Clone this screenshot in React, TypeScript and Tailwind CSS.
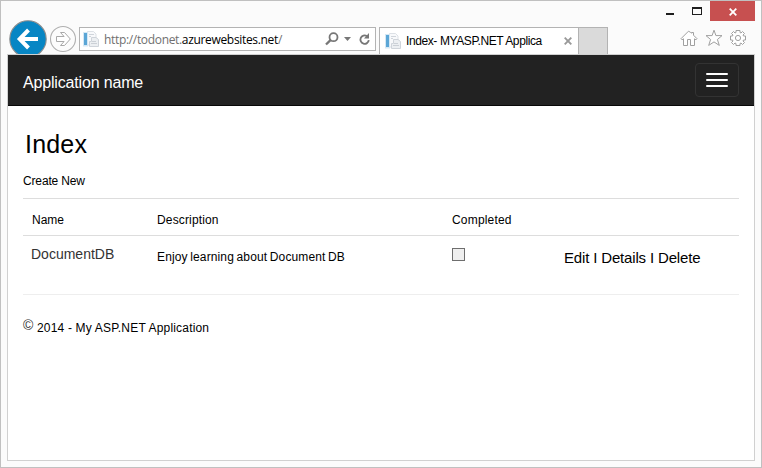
import React from "react";

const PageIcon = () => (
  <svg width="16" height="17" viewBox="0 0 16 17" className="block shrink-0">
    <path d="M4.500 2.500V.5h6l2.500 2.500v11h-8.500z" fill="#f8f9fb" stroke="#dde1e6" />
    <rect x="0" y="1" width="5" height="14.500" fill="#d5e8f5" />
    <rect x="1" y="2" width="3" height="12" fill="#5ba6d6" />
    <path d="M6 3.500h5M6 5.500h2" stroke="#d0d5db" />
    <path d="M8.500 6.500h4.500l2.500 2v7H6.500v-5h2z" fill="#eceff2" stroke="#cfd4da" />
    <path d="M9 10.500h4M8 12.500h6" stroke="#cbd0d6" />
  </svg>
);

const BackIcon = () => (
  <svg width="39" height="34" viewBox="0 0 39 34" className="block shrink-0">
    <circle cx="19" cy="19" r="18.200" fill="#0786c4" stroke="#8c8c8c" strokeWidth="1.1" />
    <path d="M10.500 19h18.500M19.500 10l-8.800 9 8.800 9" fill="none" stroke="#fff" strokeWidth="4" />
  </svg>
);

const ForwardIcon = () => (
  <svg width="28" height="28" viewBox="0 0 28 28" className="block shrink-0">
    <circle cx="14" cy="14" r="12.500" fill="#fcfcfc" stroke="#b0b0b0" strokeWidth="1.1" />
    <path d="M7.500 11.500h7.600l-3.600-4h4l5.800 6.500-5.800 6.500h-4l3.600-4H7.500z" fill="#fff" stroke="#a9a9a9" />
  </svg>
);

const SearchIcon = () => (
  <svg width="14" height="14" viewBox="0 0 14 14" className="block">
    <circle cx="8.500" cy="5.200" r="4" fill="none" stroke="#777" strokeWidth="1.800" />
    <path d="M5.500 8.200L1 12.500" stroke="#777" strokeWidth="2.400" />
  </svg>
);

const RefreshIcon = () => (
  <svg width="12" height="13" viewBox="0 0 12 13" className="block">
    <path d="M9.800 7.200a4.200 4.200 0 1 1-2-4.200" fill="none" stroke="#777" strokeWidth="1.800" />
    <path d="M10 0v5.500H5z" fill="#777" />
  </svg>
);

const HomeIcon = () => (
  <svg width="18" height="17" viewBox="0 0 18 17" className="block">
    <path
      d="M8.500 1.200L1 8.700l1 1.100 1.500-1v6.700h4v-6h3v6h4V8.800l1.500 1 1-1.100-3.500-3.500V2.500h-2v.8l-1-1z"
      fill="#fff"
      stroke="#a0a0a0"
    />
  </svg>
);

const StarIcon = () => (
  <svg width="18" height="18" viewBox="0 0 18 18" className="block">
    <path
      d="M9 1.200l1.900 5.400h6.100l-4.600 3.900 1.900 5.900L9 12.900l-5.300 3.500 1.900-5.900L1 6.600h6.100z"
      fill="#fff"
      stroke="#a0a0a0"
    />
  </svg>
);

const GearIcon = () => (
  <svg width="18" height="18" viewBox="0 0 18 18" className="block">
    <path
      d="M7 1.500h4v2l1 .5 1.500-1.500 2 2L14 6l.5 1h2v4h-2l-.5 1 1.500 1.500-2 2L12 14l-1 .5v2H7v-2L6 14l-1.500 1.500-2-2L4 12l-.5-1h-2V7h2L4 6 2.500 4.500l2-2L6 4l1-.5z"
      fill="#fff"
      stroke="#a0a0a0"
      strokeLinejoin="round"
    />
    <circle cx="9" cy="9" r="2.600" fill="#fff" stroke="#a0a0a0" />
  </svg>
);

const grid = "grid grid-cols-[125px_295px_112px_1fr] pl-[9px]";

function BrowserChrome() {
  return (
    <header className="h-[53px] shrink-0">
      <div className="flex h-5 items-start justify-end pr-[6px]">
        <svg width="44" height="20" viewBox="0 0 44 20" className="block">
          <rect x="0" y="12" width="8" height="2" fill="#1e1e1e" />
          <path d="M26 6h10v8H26zM27 8v5h8V8z" fill="#1e1e1e" fillRule="evenodd" />
        </svg>
        <div className="flex h-5 w-[45px] items-center justify-center bg-[#c75050]">
          <svg width="8" height="8" viewBox="0 0 8 8" className="mt-[1px] block">
            <path d="M.7.7l6.600 6.600M7.300.7L.7 7.300" stroke="#fff" strokeWidth="1.800" />
          </svg>
        </div>
      </div>
      <div className="flex h-[33px] items-start pl-2">
        <div className="-mt-[1px]"><BackIcon /></div>
        <div className="ml-[1px] mt-1"><ForwardIcon /></div>
        <div className="ml-[2px] mt-[6px] flex h-6 w-[297px] items-center border border-[#b3b3b3] bg-white">
          <div className="ml-[3px]"><PageIcon /></div>
          <span className="ml-[5px] w-[221px] shrink-0 whitespace-pre pt-[1px] font-['Open_Sans',sans-serif] text-[12px] tracking-[-0.33px] text-[#707070]">
            http://todonet.<span className="text-black">azurewebsites.net</span>/
          </span>
          <div><SearchIcon /></div>
          <svg width="7" height="4" viewBox="0 0 7 4" className="ml-[5px] block"><path d="M0 0h7L3.500 4z" fill="#777" /></svg>
          <div className="ml-[8px]"><RefreshIcon /></div>
        </div>
        <div className="ml-[3px] mt-[6px] flex h-[27px] w-[200px] items-center border border-b-0 border-[#b3b3b3] bg-white">
          <div className="ml-[5px]"><PageIcon /></div>
          <span className="ml-[5px] w-[158px] whitespace-nowrap text-[12px] tracking-[-0.4px]">Index- MYASP.NET Applica</span>
          <svg width="8" height="8" viewBox="0 0 8 8" className="block"><path d="M.7.7l6.600 6.600M7.300.7L.7 7.300" stroke="#999" strokeWidth="1.900" /></svg>
        </div>
        <div className="mt-[6px] h-[27px] w-[29px] border border-b-0 border-l-0 border-[#b3b3b3] bg-[#dadada]" />
        <div className="ml-[72px] mt-[8px] flex items-center gap-[6.500px]">
          <HomeIcon />
          <StarIcon />
          <GearIcon />
        </div>
      </div>
    </header>
  );
}

export default function App() {
  return (
    <div className="flex h-[468px] w-[762px] flex-col overflow-hidden border border-[#c0c0c0] bg-[#fbfbfb] font-['Liberation_Sans',Arial,sans-serif] text-[12px] leading-4 text-black">
      <BrowserChrome />
      <div className="ml-[6px] flex h-[407px] w-[748px] flex-col border border-[#d0d0d0] bg-white">
        <nav className="flex h-[51px] shrink-0 items-center justify-between border-b border-[#080808] bg-[#222] pl-[15px] pr-[15px]">
          <span className="mt-[5px] text-[16px] leading-5 tracking-[-0.17px] text-white">Application name</span>
          <button className="flex h-[34px] w-11 flex-col items-center justify-center gap-1 rounded border border-[#333]" aria-label="Menu">
            <span className="h-[2px] w-[22px] rounded-[1px] bg-white" />
            <span className="h-[2px] w-[22px] rounded-[1px] bg-white" />
            <span className="h-[2px] w-[22px] rounded-[1px] bg-white" />
          </button>
        </nav>
        <main className="px-[15px] pt-[22px]">
          <h1 className="ml-[2px] h-8 text-[25px] leading-8 tracking-[0.2px]">Index</h1>
          <a className="mt-[13px] block h-4 tracking-[-0.15px]">Create New</a>
          <section className="mt-[9px] border-t border-[#ddd]">
            <div className={`${grid} h-[37px] border-b border-[#ddd] pt-[13px]`}>
              <span>Name</span>
              <span className="tracking-[0.150px]">Description</span>
              <span className="tracking-[0.180px]">Completed</span>
            </div>
            <div className={`${grid} h-[59px] border-b border-[#eee]`}>
              <span className="-ml-[1px] pt-[10px] text-[14px] text-[#333]">DocumentDB</span>
              <span className="whitespace-nowrap pt-[13px] tracking-[0.130px] [word-spacing:-0.9px]">Enjoy learning about Document DB</span>
              <span className="pt-3"><span className="block h-[13px] w-[13px] border border-[#6e6e6e] bg-[#efefef]" /></span>
              <span className="whitespace-nowrap pt-[14px] text-[15px] tracking-[-0.160px]">Edit I Details I Delete</span>
            </div>
          </section>
          <footer className="mt-[22px] flex">
            <span className="w-[14px] text-[14px] text-[#333]">©</span>
            <span className="mt-[3px] tracking-[0.180px]">2014 - My ASP.NET Application</span>
          </footer>
        </main>
      </div>
    </div>
  );
}
